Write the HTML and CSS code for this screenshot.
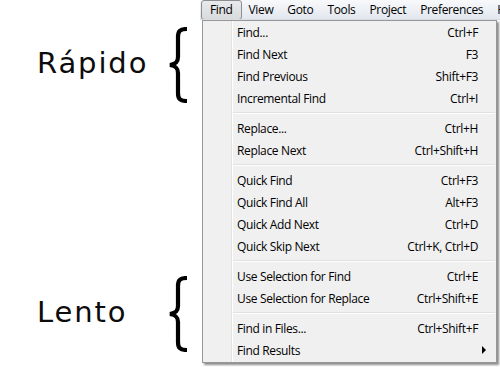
FILE: index.html
```html
<!DOCTYPE html>
<html>
<head>
<meta charset="utf-8">
<link rel="stylesheet" href="styles.css">
</head>
<body>
<div class="app">
  <div class="labels">
    <div class="group group-fast">
      <span class="label">Rápido</span>
      <svg class="brace" width="22" height="76" viewBox="0 0 22 76"><path d="M19 2 C12 2 10 4 10 10 L10 30 C10 35 8 37 2 38 C8 39 10 41 10 46 L10 66 C10 72 12 74 19 74" fill="none" stroke="#000" stroke-width="4.2"/></svg>
    </div>
    <div class="group group-slow">
      <span class="label">Lento</span>
      <svg class="brace" width="22" height="76" viewBox="0 0 22 76"><path d="M19 2 C12 2 10 4 10 10 L10 30 C10 35 8 37 2 38 C8 39 10 41 10 46 L10 66 C10 72 12 74 19 74" fill="none" stroke="#000" stroke-width="4.2"/></svg>
    </div>
  </div>
  <div class="window">
    <div class="menubar">
      <span class="top active">Find</span>
      <span class="top">View</span>
      <span class="top">Goto</span>
      <span class="top">Tools</span>
      <span class="top">Project</span>
      <span class="top">Preferences</span>
      <span class="top">Help</span>
    </div>
    <div class="dropdown">
      <div class="item"><span>Find...</span><span>Ctrl+F</span></div>
      <div class="item"><span>Find Next</span><span>F3</span></div>
      <div class="item"><span>Find Previous</span><span>Shift+F3</span></div>
      <div class="item"><span>Incremental Find</span><span>Ctrl+I</span></div>
      <div class="sep"></div>
      <div class="item"><span>Replace...</span><span>Ctrl+H</span></div>
      <div class="item"><span>Replace Next</span><span>Ctrl+Shift+H</span></div>
      <div class="sep"></div>
      <div class="item"><span>Quick Find</span><span>Ctrl+F3</span></div>
      <div class="item"><span>Quick Find All</span><span>Alt+F3</span></div>
      <div class="item"><span>Quick Add Next</span><span>Ctrl+D</span></div>
      <div class="item"><span>Quick Skip Next</span><span>Ctrl+K, Ctrl+D</span></div>
      <div class="sep"></div>
      <div class="item"><span>Use Selection for Find</span><span>Ctrl+E</span></div>
      <div class="item"><span>Use Selection for Replace</span><span>Ctrl+Shift+E</span></div>
      <div class="sep"></div>
      <div class="item"><span>Find in Files...</span><span>Ctrl+Shift+F</span></div>
      <div class="item"><span>Find Results</span><span class="arrow"></span></div>
    </div>
  </div>
</div>
</body>
</html>
```
FILE: styles.css
```css
* { box-sizing: border-box; }
html, body { margin: 0; padding: 0; background: #fff; }
body { width: 500px; height: 367px; overflow: hidden; }
.app { display: flex; width: 500px; height: 367px; }
.labels {
  width: 200px;
  flex: none;
  display: flex;
  flex-direction: column;
  padding-top: 27px;
}
.group {
  display: flex;
  align-items: center;
  height: 76px;
  padding-left: 37px;
}
.group-slow { margin-top: 173px; }
.label {
  font-family: "DejaVu Sans", sans-serif;
  font-size: 29px;
  letter-spacing: 1.9px;
  color: #0c0c0c;
  width: 134px;
  margin-top: -5px;
}
.brace { flex: none; margin-left: -3px; }
.window {
  flex: 1;
  display: flex;
  flex-direction: column;
  font-family: "Open Sans", sans-serif;
  font-size: 12px;
  letter-spacing: -0.35px;
  color: #000;
}
.menubar {
  height: 20px;
  display: flex;
  align-items: center;
  white-space: nowrap;
  overflow: hidden;
  background: linear-gradient(#f8f9fb, #e2e7ee);
  border-bottom: 1px solid #d9dde3;
}
.top {
  padding: 0 6px;
  line-height: 18px;
  border: 1px solid transparent;
  flex: none;
}
.active {
  margin-left: 1px;
  padding: 0 8px;
  border-color: #8c8e90;
  border-radius: 3px;
  background: linear-gradient(#e9eaeb, #d9dadc);
}
.dropdown {
  margin-left: 2px;
  width: 295px;
  height: 343px;
  background: #f0f0f0 linear-gradient(to right, transparent 28px, #e2e3e3 28px, #e2e3e3 29px, #fff 29px, #fff 30px, transparent 30px);
  border: 1px solid #979797;
  box-shadow: 2px 2px 2px rgba(0,0,0,0.45);
}
.item {
  height: 22px;
  display: flex;
  justify-content: space-between;
  align-items: center;
  padding: 0 18px 0 34px;
  white-space: nowrap;
}
.sep {
  height: 8px;
  margin-left: 30px;
  margin-right: 1px;
  padding-top: 3px;
}
.sep::before {
  content: "";
  display: block;
  height: 1px;
  background: #e0e0e0;
  border-bottom: 1px solid #fff;
  box-sizing: content-box;
}
.arrow {
  width: 0;
  height: 0;
  margin-right: -8px;
  border-left: 4px solid #000;
  border-top: 4px solid transparent;
  border-bottom: 4px solid transparent;
}
```
